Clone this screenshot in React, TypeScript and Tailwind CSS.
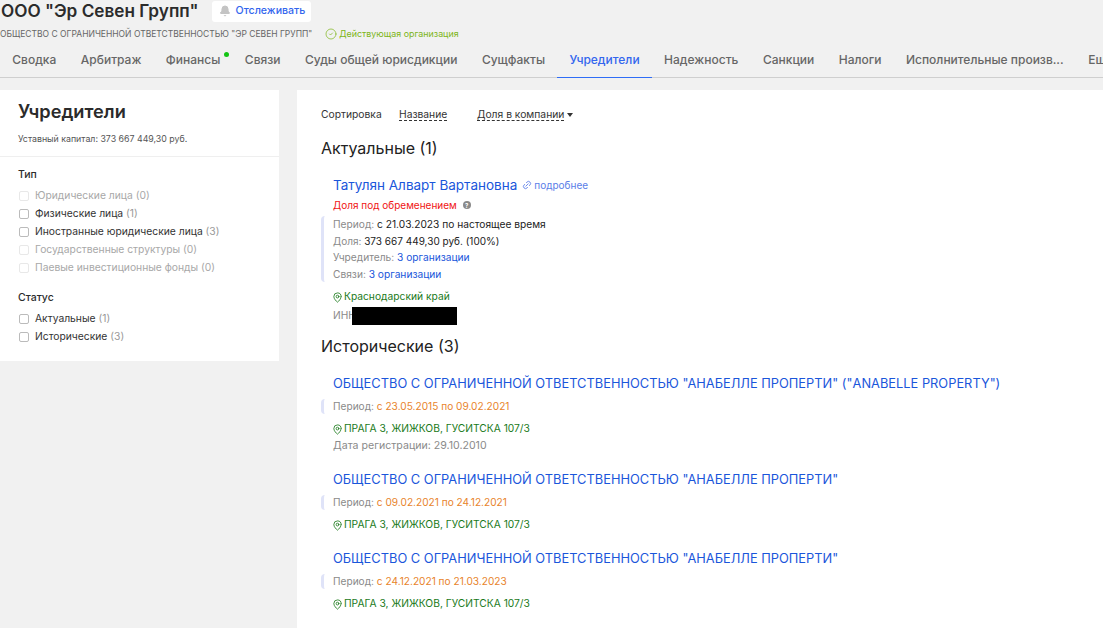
import { Bell, CircleCheck, Link2, MapPin } from "lucide-react";

const FONT = "font-['Inter','Noto_Sans',sans-serif]";

const TABS = [
  { label: "Сводка" },
  { label: "Арбитраж" },
  { label: "Финансы", dot: true },
  { label: "Связи" },
  { label: "Суды общей юрисдикции" },
  { label: "Сущфакты" },
  { label: "Учредители", active: true },
  { label: "Надежность" },
  { label: "Санкции" },
  { label: "Налоги" },
  { label: "Исполнительные произв..." },
  { label: "Ещё" },
];

function FilterRow({ label, count, disabled }: { label: string; count: number; disabled?: boolean }) {
  return (
    <div className="flex h-[18px] items-center">
      <span className={`h-[10px] w-[10px] rounded-[2px] border ${disabled ? "border-[#e8e8e8]" : "border-[#bbbbbb]"}`} />
      <span className={`ml-[6px] text-[10.3px] ${disabled ? "text-[#a8a8a8]" : "text-[#333]"}`}>
        {label} <span className={disabled ? "" : "text-[#999]"}>({count})</span>
      </span>
    </div>
  );
}

function Address({ text }: { text: string }) {
  return (
    <div className="-ml-px flex h-[18px] items-center gap-[1px] text-[10.25px] text-[#1a7a1a]">
      <MapPin size={11} strokeWidth={1.8} />
      {text}
    </div>
  );
}

function Period({ text }: { text: string }) {
  return (
    <div className="mt-[5px] flex h-[15px] items-center rounded-l-sm border-l-[3px] border-[#dfe3f8] pl-[9px] text-[10.15px] text-[#8a8a8a]">
      Период:&nbsp;<span className="text-[#e8842c]">{text}</span>
    </div>
  );
}

function HistoryItem({ name, period, date }: { name: string; period: string; date?: string }) {
  return (
    <div className="mt-[15px]">
      <a className="block pl-[12px] text-[12.85px] leading-[20px] text-[#1a56db]">{name}</a>
      <Period text={period} />
      <div className="mt-[6px] pl-[12px]">
        <Address text="ПРАГА 3, ЖИЖКОВ, ГУСИТСКА 107/3" />
        {date && <div className="-mt-[1px] mb-[2px] h-[18px] text-[10.6px] leading-[18px] text-[#8a8a8a]">Дата регистрации: {date}</div>}
      </div>
    </div>
  );
}

export default function App() {
  return (
    <div className={`h-[628px] w-[1103px] overflow-hidden bg-[#f1f1f1] ${FONT}`}>
      {/* Header */}
      <div className="flex h-[22px] items-center pl-[1px]">
        <h1 className="text-[17.2px] font-semibold leading-[22px] text-[#2b2b2b]">ООО "Эр Севен Групп"</h1>
        <button className="ml-[14px] flex h-[21px] w-[99px] items-center justify-center gap-[5px] rounded-[3px] bg-white text-[10.6px] font-medium text-[#3366ee]">
          <Bell size={12} className="fill-[#c4c4c4] text-[#c4c4c4]" />
          Отслеживать
        </button>
      </div>
      <div className="mt-[5px] flex h-[14px] items-center">
        <span className="text-[8.5px] text-[#666]">ОБЩЕСТВО С ОГРАНИЧЕННОЙ ОТВЕТСТВЕННОСТЬЮ "ЭР СЕВЕН ГРУПП"</span>
        <span className="ml-[13px] flex items-center gap-[2px] text-[8.9px] text-[#7cb518]">
          <CircleCheck size={12} strokeWidth={1.4} />
          Действующая организация
        </span>
      </div>

      <nav className="flex h-[37px] border-b border-[#cfcfcf] whitespace-nowrap">
        {TABS.map((t) => (
          <div
            key={t.label}
            className={`relative shrink-0 px-[12.25px] pt-[10px] text-[12px] font-medium ${
              t.active ? "h-[37px] border-b border-[#2f6df6] text-[#3366ee]" : "text-[#666]"
            }`}
          >
            {t.label}
            {t.dot && <span className="absolute right-[4px] top-[11px] h-[5px] w-[5px] rounded-full bg-[#14c414]" />}
          </div>
        ))}
      </nav>

      <div className="mt-[12px] flex items-start gap-[18px]">
        {/* Filters */}
        <aside className="h-[271px] w-[279px] shrink-0 bg-white">
          <div className="h-[67px] border-b border-[#efefef] pl-[18px] pt-[9px]">
            <h2 className="text-[18.2px] font-semibold leading-[24px] text-[#2b2b2b]">Учредители</h2>
            <p className="mt-[9px] text-[8.8px] text-[#555]">Уставный капитал: 373 667 449,30 руб.</p>
          </div>
          <div className="pl-[19px] pt-[11px]">
            <h3 className="mb-[5px] -ml-[1px] h-[14px] text-[10.5px] font-medium leading-[14px] text-[#2b2b2b]">Тип</h3>
            <FilterRow label="Юридические лица" count={0} disabled />
            <FilterRow label="Физические лица" count={1} />
            <FilterRow label="Иностранные юридические лица" count={3} />
            <FilterRow label="Государственные структуры" count={0} disabled />
            <FilterRow label="Паевые инвестиционные фонды" count={0} disabled />
            <h3 className="mb-[5px] -ml-[1px] mt-[14px] h-[14px] text-[10.5px] font-medium leading-[14px] text-[#2b2b2b]">Статус</h3>
            <FilterRow label="Актуальные" count={1} />
            <FilterRow label="Исторические" count={3} />
          </div>
        </aside>

        {/* Results */}
        <main className="h-[538px] flex-1 bg-white pl-[24px] pt-[16px]">
          <div className="flex h-[18px] items-center text-[10.3px] text-[#333]">
            <span className="w-[78px]">Сортировка</span>
            <span className="w-[78px] underline decoration-dashed underline-offset-2">Название</span>
            <span className="underline decoration-dashed underline-offset-2">Доля в компании</span>
            <span className="ml-[3px] h-0 w-0 border-x-[3px] border-t-[4px] border-x-transparent border-t-[#333]" />
          </div>
          <h2 className="mt-[13px] text-[16px] leading-[22px] text-[#222]">Актуальные (1)</h2>

          <div className="mt-[16px] flex items-center pl-[12px]">
            <a className="text-[13.5px] leading-[20px] text-[#1a56db]">Татулян Алварт Вартановна</a>
            <Link2 size={10} className="ml-[5px] -rotate-45 text-[#5b7ee8]" />
            <a className="ml-[2px] text-[10px] text-[#5b7ee8]">подробнее</a>
          </div>
          <div className="mt-[1px] flex h-[18px] items-center pl-[12px] text-[10px] text-[#f01414]">
            Доля под обременением
            <span className="ml-[6px] flex h-[8px] w-[8px] items-center justify-center rounded-full bg-[#8a8a8a] text-[6px] font-bold text-white">?</span>
          </div>
          <div className="mt-[2px] rounded-l-sm border-l-[3px] border-[#dfe3f8] pl-[9px] text-[10.2px] leading-[16.5px] text-[#8a8a8a]">
            <div>Период: <span className="text-[#222]">с 21.03.2023 по настоящее время</span></div>
            <div className="text-[10px]">Доля: <span className="text-[#222]">373 667 449,30 руб. (100%)</span></div>
            <div>Учредитель: <span className="text-[#1a56db]">3 организации</span></div>
            <div>Связи: <span className="text-[#1a56db]">3 организации</span></div>
          </div>
          <div className="mt-[6px] pl-[12px]">
            <Address text="Краснодарский край" />
            <div className="mt-[1px] flex h-[18px] items-center text-[10.2px] text-[#8a8a8a]">
              ИНН
              <span className="-ml-[4px] h-[18px] w-[105px] bg-black" />
            </div>
          </div>

          <h2 className="mb-[17px] mt-[10px] text-[16px] leading-[22px] text-[#222]">Исторические (3)</h2>
          <div>
            <HistoryItem
              name={'ОБЩЕСТВО С ОГРАНИЧЕННОЙ ОТВЕТСТВЕННОСТЬЮ "АНАБЕЛЛЕ ПРОПЕРТИ" ("ANABELLE PROPERTY")'}
              period="с 23.05.2015 по 09.02.2021"
              date="29.10.2010"
            />
            <HistoryItem
              name={'ОБЩЕСТВО С ОГРАНИЧЕННОЙ ОТВЕТСТВЕННОСТЬЮ "АНАБЕЛЛЕ ПРОПЕРТИ"'}
              period="с 09.02.2021 по 24.12.2021"
            />
            <HistoryItem
              name={'ОБЩЕСТВО С ОГРАНИЧЕННОЙ ОТВЕТСТВЕННОСТЬЮ "АНАБЕЛЛЕ ПРОПЕРТИ"'}
              period="с 24.12.2021 по 21.03.2023"
            />
          </div>
        </main>
      </div>
    </div>
  );
}
